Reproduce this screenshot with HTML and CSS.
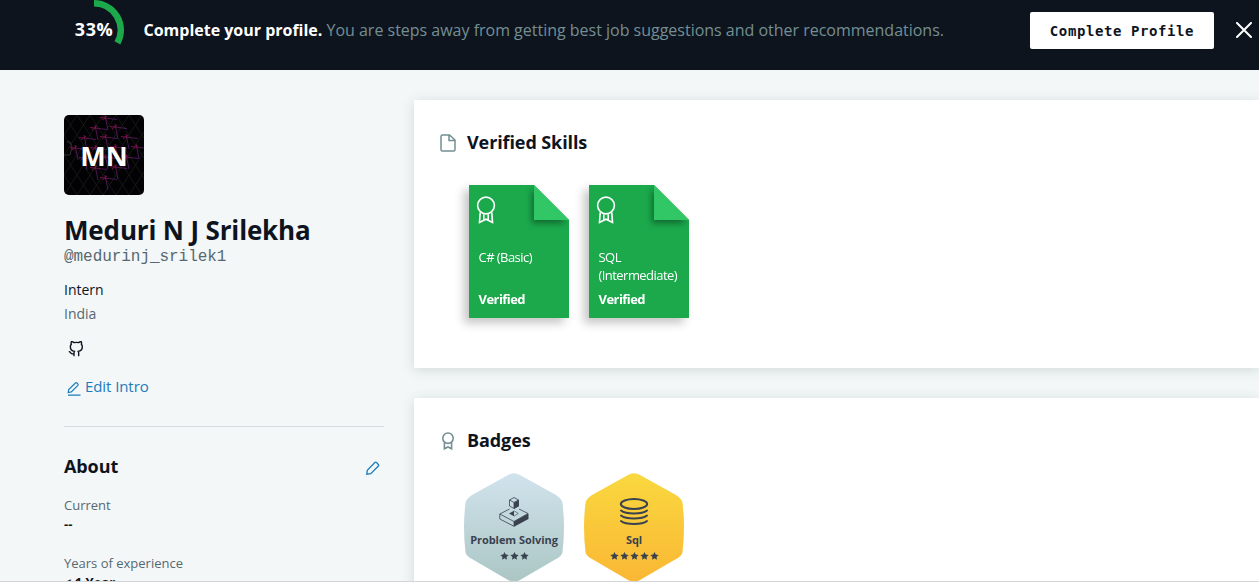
FILE: index.html
```html
<!DOCTYPE html>
<html lang="en">
<head>
<meta charset="utf-8">
<title>Profile</title>
<link rel="stylesheet" href="styles.css">
</head>
<body>
<svg class="defs" width="0" height="0" aria-hidden="true">
  <symbol id="award" viewBox="0 0 20 28"><circle cx="10" cy="9.5" r="8.4"/><path d="M4.200 16.500 3.500 26.400 10 23.200 16.500 26.400 15.800 16.500M7.800 18.200v5.500M12.200 18.200v5.500"/></symbol>
  <symbol id="medal" viewBox="0 0 14 18"><circle cx="7" cy="6.200" r="5.200"/><path d="M3.400 10.500v6.300L7 15l3.600 1.800v-6.300"/></symbol>
  <symbol id="star" viewBox="0 0 24 24"><path d="M12 1l3.300 7.100 7.700 1-5.700 5.300 1.500 7.700L12 18.300l-6.800 3.800 1.500-7.700L1 9.100l7.700-1z"/></symbol>
</svg>
<div class="screen">
  <header class="banner">
    <div class="progress">
      <svg class="ring" viewBox="0 0 60 60"><path d="M30 3.300A26.700 26.700 0 0 1 53.400 42.860"/></svg>
      <span class="percent">33%</span>
    </div>
    <p class="message"><strong>Complete your profile.</strong> <span>You are steps away from getting best job suggestions and other recommendations.</span></p>
    <button class="complete">Complete Profile</button>
    <svg class="close" viewBox="0 0 16 16"><path d="M1 1l14 14M15 1L1 15"/></svg>
  </header>
  <div class="content">
    <aside class="sidebar">
      <div class="avatar">
        <svg class="pattern" viewBox="0 0 80 80">
          <defs>
            <linearGradient id="neon" x1="0" y1="0" x2="1" y2="1"><stop offset="0" stop-color="#a80f48"/><stop offset=".5" stop-color="#5a1b66"/><stop offset="1" stop-color="#34248c"/></linearGradient>
            <pattern id="mesh" width="13" height="20" patternUnits="userSpaceOnUse"><path d="M0 0l6.500 10L13 0M0 20l6.500-10L13 20" fill="none" stroke="#191919" stroke-width=".8"/></pattern>
            <path id="spark" d="M-5-.5L12 1.500M0-3L3 12M-3 2L2-2" fill="none" stroke="url(#neon)" stroke-width=".8"/>
          </defs>
          <rect width="80" height="80" fill="#020103"/>
          <rect width="80" height="80" fill="url(#mesh)"/>
          <path d="M3 27h3l2 5-2 8H0" fill="none" stroke="#333"/>
          <use href="#spark" x="41" y="3"/><use href="#spark" x="31" y="13"/><use href="#spark" x="51" y="12"/>
          <use href="#spark" x="20" y="23"/><use href="#spark" x="41" y="22"/><use href="#spark" x="62" y="22"/>
          <use href="#spark" x="11" y="33"/><use href="#spark" x="31" y="33"/><use href="#spark" x="51" y="32"/><use href="#spark" x="72" y="32"/>
          <use href="#spark" x="20" y="43"/><use href="#spark" x="41" y="42"/><use href="#spark" x="62" y="42"/>
          <use href="#spark" x="31" y="53"/><use href="#spark" x="51" y="52"/><use href="#spark" x="41" y="63"/>
        </svg>
        <span class="initials">MN</span>
      </div>
      <h1 class="name">Meduri N J Srilekha</h1>
      <p class="handle">@medurinj_srilek1</p>
      <p class="role">Intern</p>
      <p class="place">India</p>
      <svg class="github" viewBox="0 0 24 24"><path d="M9 19c-5 1.500-5-2.500-7-3m14 6v-3.870a3.370 3.370 0 0 0-.94-2.610c3.140-.35 6.440-1.540 6.440-7A5.440 5.440 0 0 0 20 4.770 5.070 5.070 0 0 0 19.910 1S18.730.65 16 2.480a13.380 13.380 0 0 0-7 0C6.270.65 5.090 1 5.090 1A5.070 5.070 0 0 0 5 4.770a5.440 5.440 0 0 0-1.500 3.780c0 5.420 3.300 6.610 6.440 7A3.370 3.370 0 0 0 9 18.130V22"/></svg>
      <a class="edit"><svg class="edit-icon" viewBox="0 0 14 15"><path d="M1.200 11.500l.5-3L8.500 2c1-1 3.400 1.300 2.400 2.400L4.300 10.900zM1 14.200h12.500"/></svg><span>Edit Intro</span></a>
      <section class="about">
        <div class="about-head">
          <h2 class="about-title">About</h2>
          <svg class="pencil" viewBox="0 0 14 14"><path d="M.8 13.200l.5-4L9.100 1.300c.8-.7 4.300 2.600 3.500 3.500L4.800 12.600z"/></svg>
        </div>
        <dl class="facts">
          <dt>Current</dt><dd>--</dd>
          <dt>Years of experience</dt><dd>&lt; 1 Year</dd>
        </dl>
      </section>
    </aside>
    <main class="main">
      <section class="card skills">
        <h2 class="card-title"><svg class="file" viewBox="0 0 16 18"><path d="M2.500 1h7L15 6v9.500a1.500 1.500 0 0 1-1.500 1.500h-11A1.500 1.500 0 0 1 1 15.500v-13A1.500 1.500 0 0 1 2.500 1zM9 1v5.500h6"/></svg><span>Verified Skills</span></h2>
        <div class="skill-list">
          <article class="skill">
            <div class="sheet"><svg class="award"><use href="#award"/></svg><span class="skill-name">C# (Basic)</span><strong class="verified">Verified</strong></div>
            <svg class="fold" viewBox="0 0 35 35"><path d="M0 0v35h35z"/></svg>
          </article>
          <article class="skill">
            <div class="sheet"><svg class="award"><use href="#award"/></svg><span class="skill-name">SQL (Intermediate)</span><strong class="verified">Verified</strong></div>
            <svg class="fold" viewBox="0 0 35 35"><path d="M0 0v35h35z"/></svg>
          </article>
        </div>
      </section>
      <section class="card badges">
        <h2 class="card-title"><svg class="medal"><use href="#medal"/></svg><span>Badges</span></h2>
        <div class="badge-list">
          <div class="badge">
            <svg class="hexagon" viewBox="0 0 100 109"><defs><linearGradient id="silver" x1="0" y1="0" x2="0" y2="1"><stop offset="0" stop-color="#d1e3ed"/><stop offset="1" stop-color="#abc6c4"/></linearGradient></defs><path fill="url(#silver)" d="M44 2Q50-1.300 56 2L92 22Q98 26 98.500 30Q101.500 54 98.500 79Q98 83 92 86L56 107Q50 110.300 44 107L8 86Q2 83 1.500 79Q-1.500 54 1.500 30Q2 26 8 22Z"/></svg>
            <div class="badge-body">
              <svg class="symbol" viewBox="0 0 30 30"><g fill="none" stroke="#39424e" stroke-width=".8"><path d="M10.500 12L.8 17 15 24.500l14-8-9-4.500M.8 17v5l14.200 7.300V24.500M15 .5l4.500 2.500v6L15 11.500 10.500 9V3zM10.500 3 15 5.500l4.500-2.500M15 5.500v6"/></g><path fill="#39424e" d="M15 5.500l4.800-2.500v6.200L15 11.800zM15 24.500l14.500-8v5.500L15 29.800zM10 16.500l5-2.800v5.500z"/><path d="M15 13.700l4.300 2.800-4.300 2.700" fill="none" stroke="#39424e" stroke-width=".6"/></svg>
              <span class="badge-name">Problem Solving</span>
              <span class="stars"><svg><use href="#star"/></svg><svg><use href="#star"/></svg><svg><use href="#star"/></svg></span>
            </div>
          </div>
          <div class="badge">
            <svg class="hexagon" viewBox="0 0 100 109"><defs><linearGradient id="gold" x1="0" y1="0" x2="0" y2="1"><stop offset="0" stop-color="#f9d83f"/><stop offset="1" stop-color="#fab734"/></linearGradient></defs><path fill="url(#gold)" d="M44 2Q50-1.300 56 2L92 22Q98 26 98.500 30Q101.500 54 98.500 79Q98 83 92 86L56 107Q50 110.300 44 107L8 86Q2 83 1.500 79Q-1.500 54 1.500 30Q2 26 8 22Z"/></svg>
            <div class="badge-body">
              <svg class="symbol" viewBox="0 0 30 30"><g fill="none" stroke="#39424e" stroke-width="2" stroke-linecap="round"><ellipse cx="15" cy="7" rx="13.200" ry="5"/><path d="M2 13.500c5 4 21 4 26 0M2 18.500c5 4 21 4 26 0M2 24c5 4 21 4 26 0"/></g></svg>
              <span class="badge-name">Sql</span>
              <span class="stars"><svg><use href="#star"/></svg><svg><use href="#star"/></svg><svg><use href="#star"/></svg><svg><use href="#star"/></svg><svg><use href="#star"/></svg></span>
            </div>
          </div>
        </div>
      </section>
    </main>
  </div>
</div>
</body>
</html>
```
FILE: styles.css
```css
* { box-sizing: border-box; }
body { margin: 0; height: 584px; overflow: hidden; background: #fff; color: #0e141e; font-family: "Open Sans", sans-serif; }
h1, h2, p, dl, dd { margin: 0; }
svg { display: block; flex: none; }
.defs { position: absolute; }
.screen { height: 582px; overflow: hidden; background: #f3f7f7; border-bottom: 1px solid #d3d6d7; }

.banner { display: flex; align-items: flex-start; height: 70px; padding-left: 64px; background: #0e141e; }
.progress { display: grid; width: 60px; height: 60px; place-items: center; }
.ring, .percent { grid-area: 1 / 1; }
.ring { width: 60px; height: 60px; fill: none; stroke: #1ba94c; stroke-width: 6.6; }
.percent { color: #fff; font-size: 18px; font-weight: 700; line-height: 58px; height: 60px; letter-spacing: .5px; }
.message { width: 887px; padding-left: 19.5px; color: #738f93; font-size: 16px; line-height: 60px; white-space: nowrap; letter-spacing: -.01px; }
.message strong { color: #fff; font-weight: 700; }
.complete { flex: none; width: 184px; height: 37px; margin: 12px 22px 0 19px; padding: 0; border: 0; border-radius: 2px; background: #fff; color: #0e141e; font: bold 14px "DejaVu Sans Mono", monospace; letter-spacing: .59px; }
.close { width: 16px; height: 16px; margin-top: 22px; fill: none; stroke: #fff; stroke-width: 2; stroke-linecap: round; }

.content { display: flex; }
.sidebar { width: 320px; flex: none; margin-left: 64px; padding-top: 45px; }
.avatar { display: grid; width: 80px; height: 80px; place-items: center; border-radius: 5px; overflow: hidden; }
.pattern, .initials { grid-area: 1 / 1; }
.pattern { width: 80px; height: 80px; }
.initials { z-index: 1; padding-top: 2px; color: #fff; font-size: 27px; font-weight: 700; line-height: 36px; }
.name { margin-top: 17px; font-size: 26px; font-weight: 700; line-height: 36px; letter-spacing: -.15px; white-space: nowrap; }
.handle { margin-top: -1px; color: #576871; font: 16px/20px "Liberation Mono", monospace; letter-spacing: -.05px; }
.role { margin-top: 11px; font-size: 14px; line-height: 24px; }
.place { color: #576871; font-size: 14px; line-height: 24px; }
.github { width: 16px; height: 16px; margin: 15px 0 0 4px; fill: none; stroke: #0e141e; stroke-width: 2.1; stroke-linecap: round; stroke-linejoin: round; }
.edit { display: flex; gap: 4px; height: 24px; margin: 17px 0 0 3px; color: #1b7cbd; font-size: 15px; line-height: 24px; letter-spacing: -.08px; }
.edit-icon { width: 14px; height: 15px; margin-top: 7px; fill: none; stroke: currentColor; stroke-width: 1.2; }
.about { margin-top: 28px; border-top: 1px solid #d5dcdf; padding-top: 25px; }
.about-head { display: flex; justify-content: space-between; height: 28px; padding-right: 4px; }
.about-title { font-size: 18px; font-weight: 700; line-height: 28px; letter-spacing: -.1px; }
.pencil { width: 14px; height: 14px; margin-top: 9px; fill: none; stroke: #1b7cbd; stroke-width: 1.3; }
.facts { margin-top: 15px; font-size: 13px; line-height: 20px; }
.facts dt { color: #576871; }
.facts dd { margin-bottom: 18px; font-weight: 700; line-height: 19px; padding-bottom: 1px; }

.main { flex: 1; margin-left: 30px; padding-top: 30px; }
.card { background: #fff; box-shadow: 0 2px 12px rgba(40, 60, 65, .16); padding-left: 26px; }
.skills { height: 268px; }
.badges { height: 268px; margin-top: 30px; }
.card-title { display: flex; align-items: center; gap: 11px; height: 86px; font-size: 18px; font-weight: 700; letter-spacing: -.1px; }
.card-title span { padding-bottom: 2px; }
.file { width: 16px; height: 18px; fill: none; stroke: #738f93; stroke-width: 1.5; }
.medal { width: 14px; height: 18px; margin: 0 1px; fill: none; stroke: #738f93; stroke-width: 1.6; }
.skill-list { display: flex; gap: 20px; padding: 0 0 0 29px; margin-top: -1px; }
.skill { display: grid; width: 100px; height: 133px; filter: drop-shadow(-5px 5px 5px rgba(0, 0, 0, .23)); }
.sheet, .fold { grid-area: 1 / 1; }
.sheet { display: flex; flex-direction: column; padding: 11px 0 0 9.5px; background: #1ba94c; clip-path: polygon(0 0, 65px 0, 100px 35px, 100px 133px, 0 133px); color: #fff; font-size: 13px; line-height: 18px; letter-spacing: -.55px; }
.award { width: 20px; height: 28px; margin-left: -3px; fill: none; stroke: #fff; stroke-width: 1.6; }
.skill-name { width: 85px; height: 36px; margin-top: 24px; }
.verified { margin-top: 6px; }
.fold { z-index: 1; justify-self: end; width: 35px; height: 35px; fill: #32c766; filter: drop-shadow(-2px 3px 3px rgba(0, 0, 0, .4)); overflow: visible; }
.badge-list { display: flex; gap: 20px; margin-top: -11px; padding-left: 24px; }
.badge { display: grid; width: 100px; height: 109px; }
.hexagon, .badge-body { grid-area: 1 / 1; }
.hexagon { width: 100px; height: 109px; }
.badge-body { z-index: 1; display: flex; flex-direction: column; align-items: center; padding-top: 24px; }
.symbol { width: 30px; height: 30px; }
.badge-name { margin-top: 5px; color: #39424e; font-size: 11px; font-weight: 700; line-height: 16px; letter-spacing: -.05px; white-space: nowrap; }
.stars { display: flex; gap: 1px; margin-top: 3px; fill: #39424e; }
.stars svg { width: 9px; height: 10px; }
```
